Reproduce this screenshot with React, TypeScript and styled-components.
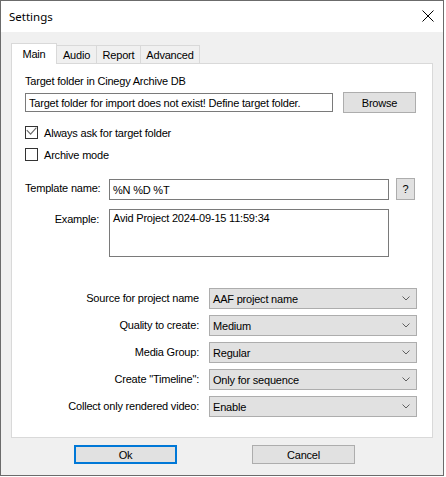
import React from 'react';
import styled, { createGlobalStyle } from 'styled-components';

const GlobalStyle = createGlobalStyle`
  html, body {
    margin: 0;
    padding: 0;
    background: #ffffff;
  }
  body {
    font-family: 'Liberation Sans', Arial, sans-serif;
    font-size: 11px;
    letter-spacing: -0.2px;
    color: #000;
  }
`;

const Window = styled.div`
  width: 442px;
  height: 474px;
  border: 1px solid #6b6b6b;
  background: #f0f0f0;
  display: flex;
  flex-direction: column;
`;

const TitleBar = styled.div`
  height: 31px;
  background: #fff;
  display: flex;
  align-items: center;
  justify-content: space-between;
  padding: 0 8px 0 8px;
`;

const Title = styled.span`
  font-family: 'Noto Sans', 'Open Sans', sans-serif;
  font-size: 11.5px;
  letter-spacing: 0;
  margin-top: -1px;
`;

const CloseGlyph = styled.svg`
  width: 12px;
  height: 12px;
  margin-right: 1px;
  margin-top: -1px;
`;

const Body = styled.div`
  flex: 1;
  padding: 11px 0 0 10px;
  display: flex;
  flex-direction: column;
`;

const TabStrip = styled.div`
  display: flex;
  align-items: flex-end;
  height: 20px;
`;

const Tab = styled.div<{ $active?: boolean; $w: number }>`
  box-sizing: border-box;
  width: ${p => p.$w}px;
  height: ${p => (p.$active ? 21 : 18)}px;
  margin-bottom: ${p => (p.$active ? -1 : 0)}px;
  background: ${p => (p.$active ? '#fff' : '#f0f0f0')};
  border: 1px solid #d9d9d9;
  border-bottom: none;
  border-left-width: ${p => (p.$active ? 1 : 0)}px;
  position: relative;
  z-index: ${p => (p.$active ? 1 : 0)};
  display: flex;
  align-items: center;
  justify-content: center;
  padding-top: ${p => (p.$active ? 0 : 1)}px;
`;

const Panel = styled.div`
  box-sizing: border-box;
  width: 422px;
  height: 375px;
  background: #fff;
  border: 1px solid #d9d9d9;
  padding: 11px 15px 0 13px;
  display: flex;
  flex-direction: column;
`;

const Caption = styled.div`
  line-height: 13px;
  height: 13px;
`;

const FolderRow = styled.div`
  display: flex;
  align-items: center;
  height: 21px;
  margin-top: 4px;
`;

const TextBox = styled.div<{ $w: number; $h: number }>`
  box-sizing: border-box;
  width: ${p => p.$w}px;
  height: ${p => p.$h}px;
  border: 1px solid #7a7a7a;
  background: #fff;
  padding: 0 3px;
  display: flex;
  align-items: center;
  white-space: nowrap;
  overflow: hidden;
`;

const MultiBox = styled(TextBox)`
  align-items: flex-start;
  padding-top: 2px;
`;

const Button = styled.div<{ $w: number; $h: number; $default?: boolean }>`
  box-sizing: border-box;
  width: ${p => p.$w}px;
  height: ${p => p.$h}px;
  background: #e1e1e1;
  border: ${p => (p.$default ? '2px solid #0078d7' : '1px solid #adadad')};
  display: flex;
  align-items: center;
  justify-content: center;
`;

const CheckRow = styled.div<{ $mt: number }>`
  display: flex;
  align-items: center;
  gap: 6px;
  height: 13px;
  margin-top: ${p => p.$mt}px;
`;

const CheckBox = styled.div`
  box-sizing: border-box;
  width: 13px;
  height: 13px;
  border: 1px solid #333;
  background: #fff;
`;

const CheckMark = styled.svg`
  display: block;
  width: 11px;
  height: 11px;
`;

const FieldRow = styled.div<{ $mt: number }>`
  display: flex;
  align-items: flex-start;
  margin-top: ${p => p.$mt}px;
`;

const FieldLabel = styled.div`
  width: 74px;
  text-align: right;
  padding-right: 10px;
  line-height: 21px;
`;

const LeftLabel = styled(FieldLabel)`
  text-align: left;
  width: 84px;
  padding-right: 0;
`;

const OptionGrid = styled.div`
  display: grid;
  grid-template-columns: 174px 208px;
  column-gap: 10px;
  row-gap: 6px;
  margin-top: 31px;
`;

const OptionLabel = styled.div`
  text-align: right;
  line-height: 21px;
`;

const Combo = styled.div`
  box-sizing: border-box;
  height: 21px;
  background: #e1e1e1;
  border: 1px solid #adadad;
  display: flex;
  align-items: center;
  justify-content: space-between;
  padding: 0 6px 0 3px;
`;

const Chevron = styled.svg`
  width: 8px;
  height: 5px;
`;

const Footer = styled.div`
  display: flex;
  gap: 75px;
  padding: 7px 0 0 63px;
`;

const tabs = [
  { name: 'Main', w: 46, active: true },
  { name: 'Audio', w: 40 },
  { name: 'Report', w: 44 },
  { name: 'Advanced', w: 59 },
];

const options = [
  ['Source for project name', 'AAF project name'],
  ['Quality to create:', 'Medium'],
  ['Media Group:', 'Regular'],
  ['Create "Timeline":', 'Only for sequence'],
  ['Collect only rendered video:', 'Enable'],
];

export default function App() {
  return (
    <>
      <GlobalStyle />
      <Window>
        <TitleBar>
          <Title>Settings</Title>
          <CloseGlyph viewBox="0 0 12 12">
            <path d="M0.5 0.5 L11.5 11.5 M11.5 0.5 L0.5 11.5" stroke="#000" strokeWidth="1" fill="none" />
          </CloseGlyph>
        </TitleBar>
        <Body>
          <TabStrip>
            {tabs.map(t => (
              <Tab key={t.name} $active={t.active} $w={t.w}>
                {t.name}
              </Tab>
            ))}
          </TabStrip>
          <Panel>
            <Caption>Target folder in Cinegy Archive DB</Caption>
            <FolderRow>
              <TextBox $w={308} $h={19}>
                Target folder for import does not exist! Define target folder.
              </TextBox>
              <Button $w={73} $h={21} style={{ marginLeft: 10 }}>
                Browse
              </Button>
            </FolderRow>
            <CheckRow $mt={13}>
              <CheckBox>
                <CheckMark viewBox="0 0 11 11">
                  <path d="M0.8 3.2 L4.6 7.2 L10.4 0.6" stroke="#6a6a6a" strokeWidth="1.1" fill="none" />
                </CheckMark>
              </CheckBox>
              Always ask for target folder
            </CheckRow>
            <CheckRow $mt={9}>
              <CheckBox />
              Archive mode
            </CheckRow>
            <FieldRow $mt={17}>
              <LeftLabel>Template name:</LeftLabel>
              <TextBox $w={280} $h={21} style={{ marginTop: 1 }}>
                %N %D %T
              </TextBox>
              <Button $w={19} $h={22} style={{ marginLeft: 7 }}>
                ?
              </Button>
            </FieldRow>
            <FieldRow $mt={9}>
              <FieldLabel>Example:</FieldLabel>
              <MultiBox $w={280} $h={48}>
                Avid Project 2024-09-15 11:59:34
              </MultiBox>
            </FieldRow>
            <OptionGrid>
              {options.map(([label, value]) => (
                <React.Fragment key={label}>
                  <OptionLabel>{label}</OptionLabel>
                  <Combo>
                    <span>{value}</span>
                    <Chevron viewBox="0 0 8 5">
                      <path d="M0.5 0.5 L4 4 L7.5 0.5" stroke="#606060" strokeWidth="1" fill="none" />
                    </Chevron>
                  </Combo>
                </React.Fragment>
              ))}
            </OptionGrid>
          </Panel>
          <Footer>
            <Button $w={103} $h={19} $default>
              Ok
            </Button>
            <Button $w={103} $h={19}>
              Cancel
            </Button>
          </Footer>
        </Body>
      </Window>
    </>
  );
}
